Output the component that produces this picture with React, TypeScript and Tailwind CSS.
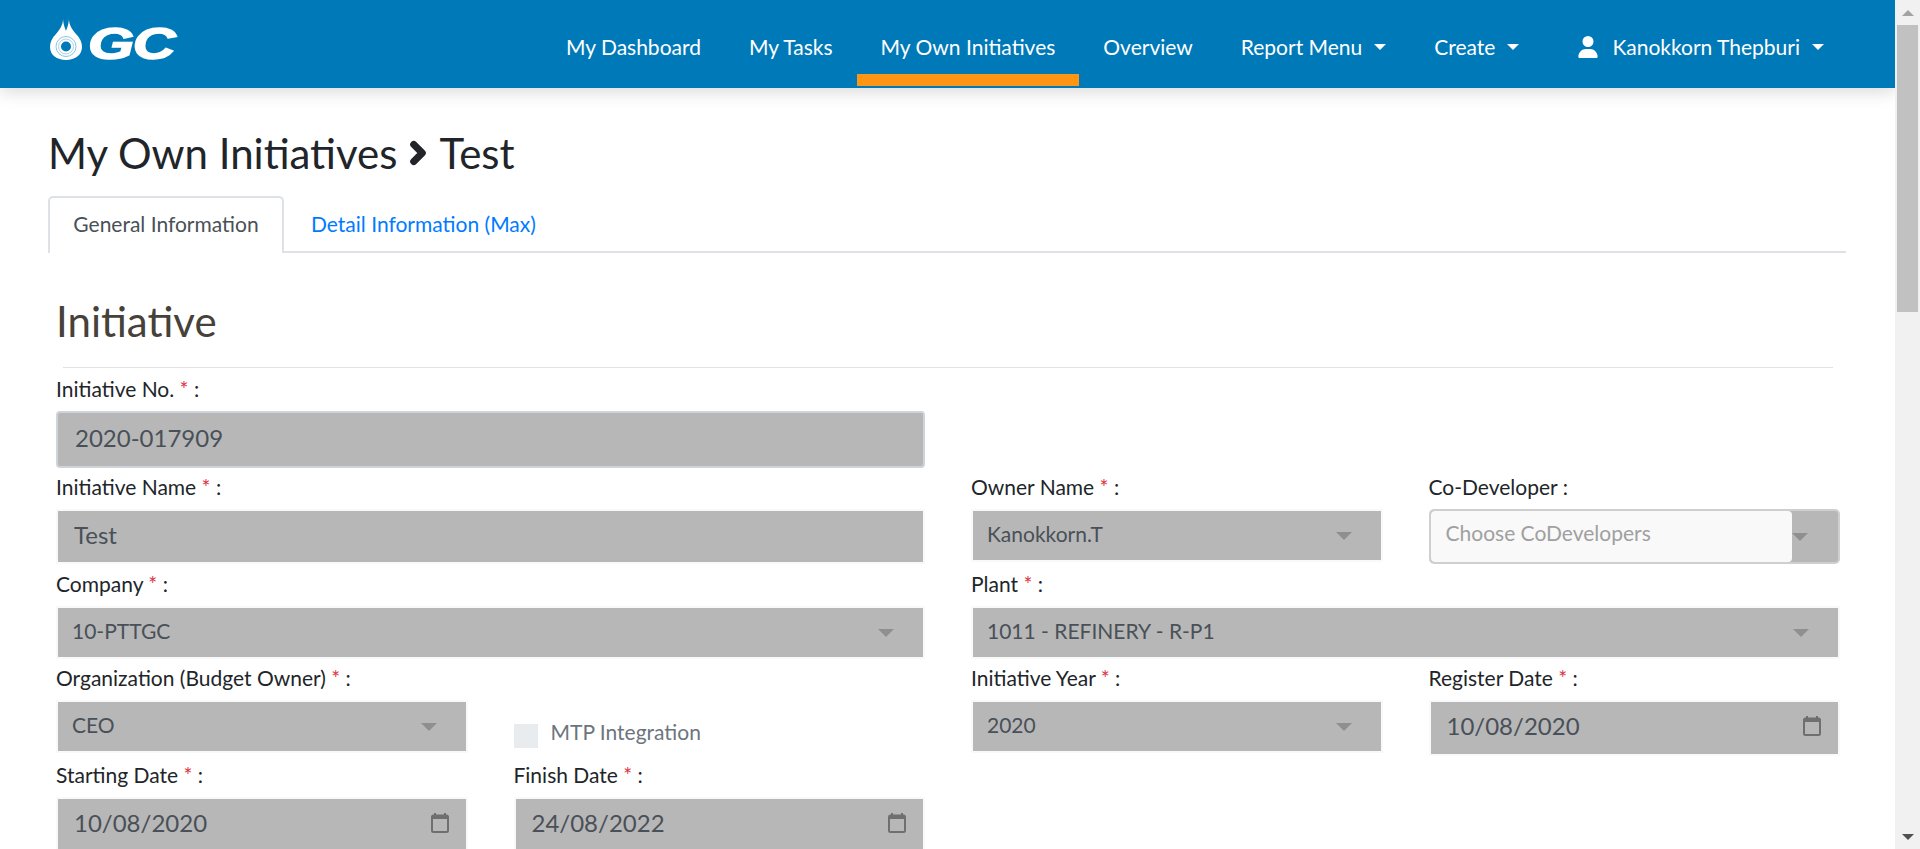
import React from "react";
import { ChevronRight } from "lucide-react";

const inputBase = "bg-[#b7b7b7] text-[#495057] flex items-center justify-between";

function Label({ text, required = true }: { text: string; required?: boolean }) {
  return (
    <label className="block h-[24px] leading-[22px] text-[21px] text-[#212529] mb-[9px]">
      {text}
      {required && <span className="text-[#dc3545]"> *</span>} :
    </label>
  );
}

function Caret() {
  return (
    <svg width="16" height="8" viewBox="0 0 16 8" className="shrink-0">
      <path d="M0 0h16L8 8z" fill="#8f8f8f" />
    </svg>
  );
}

function SelectBox({ value }: { value: string }) {
  return (
    <div className={`${inputBase} h-[53px] border-2 border-[#f9f9f9] pl-[14px] pr-[29px] text-[21px] text-[#444]`}>
      <span className="mb-[3px]">{value}</span>
      <Caret />
    </div>
  );
}

function DateBox({ value }: { value: string }) {
  return (
    <div className={`${inputBase} h-[56px] border-2 border-[#f9f9f9] pl-[16px] pr-[16px] text-[24px]`}>
      <span className="mb-[4px]">{value}</span>
      <svg width="20" height="22" viewBox="0 0 20 22" fill="none" className="shrink-0 mb-[4px]">
        <path d="M5 1v4M15 1v4" stroke="#6f6f6f" strokeWidth="2" />
        <rect x="2" y="3.500" width="16" height="16.500" rx="1.500" stroke="#6f6f6f" strokeWidth="2" />
        <path d="M2 4h16v3H2z" fill="#6f6f6f" />
      </svg>
    </div>
  );
}

function Nav() {
  const items = ["My Dashboard", "My Tasks", "My Own Initiatives", "Overview"];
  return (
    <header className="h-[88px] bg-[#0079b8] shadow-[0_4px_16px_rgba(0,0,0,0.15)] flex items-start justify-between pl-[50px] pr-[47px] relative z-10 text-white">
      <div className="flex items-center mt-[19px] h-[41px]">
        <svg width="32" height="41" viewBox="0 0 32 41">
          <path
            d="M13 0C13 6 10 10 6 15 2 19 0 23 0 28c0 8 7 13 16 13s16-5 16-13c0-5-2-9-6-13-4-5-7-9-7-15-.5 6-2 9-3 12-1-3-2.500-6-3-12z"
            fill="#fff"
          />
          <circle cx="16" cy="27.500" r="10" fill="none" stroke="#8cc4e0" strokeWidth="1" />
          <circle cx="16" cy="27.500" r="7.500" fill="none" stroke="#a6d2e8" strokeWidth="1" />
          <circle cx="16" cy="27.500" r="5" fill="#0079b8" />
        </svg>
        <span className="ml-[6px] mt-[8px] text-[44px] leading-none font-bold italic tracking-[-1px] scale-x-[1.35] origin-left [-webkit-text-stroke:1.5px_white] font-['Liberation_Sans',sans-serif]">
          GC
        </span>
      </div>
      <nav className="flex items-start text-[21px] h-[88px]">
        {items.map((item) => (
          <a
            key={item}
            className={`h-[86px] px-[24px] pt-[32px] leading-[30px] ${
              item === "My Own Initiatives" ? "border-b-[12px] border-[#ff9514]" : ""
            }`}
          >
            {item}
          </a>
        ))}
        {["Report Menu", "Create"].map((item) => (
          <a key={item} className="flex items-center h-[30px] mt-[32px] px-[24px] gap-[12px]">
            {item}
            <span className="w-0 h-0 border-x-[6px] border-x-transparent border-t-[6px] border-t-white" />
          </a>
        ))}
        <a className="flex items-center h-[30px] mt-[32px] ml-[11px] px-[24px] gap-[12px]">
          <svg width="20" height="22" viewBox="0 0 448 512" fill="#fff" className="mr-[2px]">
            <path d="M224 256a128 128 0 1 0 0-256 128 128 0 1 0 0 256zm-45.700 48C79.800 304 0 383.800 0 482.300 0 498.700 13.300 512 29.700 512h388.600c16.400 0 29.700-13.300 29.700-29.700C448 383.800 368.200 304 269.700 304h-91.400z" />
          </svg>
          Kanokkorn Thepburi
          <span className="w-0 h-0 border-x-[6px] border-x-transparent border-t-[6px] border-t-white" />
        </a>
      </nav>
    </header>
  );
}

function Scrollbar() {
  return (
    <div className="w-[25px] h-full bg-[#f1f1f1] flex flex-col items-center shrink-0">
      <div className="h-[25px] w-full flex items-center justify-center">
        <span className="w-0 h-0 border-x-[6px] border-x-transparent border-b-[6px] border-b-[#a3a3a3]" />
      </div>
      <div className="w-[21px] h-[287px] bg-[#c1c1c1]" />
      <div className="flex-1" />
      <div className="h-[25px] w-full flex items-center justify-center">
        <span className="w-0 h-0 border-x-[6px] border-x-transparent border-t-[6px] border-t-[#505050]" />
      </div>
    </div>
  );
}

export default function App() {
  return (
    <div className="h-[849px] w-full flex overflow-hidden bg-white font-['Lato',sans-serif]">
      <div className="flex-1 min-w-0 h-full overflow-hidden">
        <Nav />
        <main className="pl-[48px] pr-[49px]">
          <h1 className="mt-[41px] h-[48px] leading-[48px] text-[42px] text-[#212529] flex items-center">
            My Own Initiatives
            <ChevronRight size={34} strokeWidth={5} className="mx-[4px]" />
            Test
          </h1>
          <div className="mt-[19px] h-[57px] flex border-b-2 border-[#dee2e6] text-[21px]">
            <div className="h-[57px] w-[236px] bg-white border-2 border-b-0 border-[#dee2e6] rounded-t-[5px] flex items-center justify-center text-[#495057] pb-[3px]">
              General Information
            </div>
            <div className="h-[55px] px-[27px] flex items-center text-[#007bff]">
              Detail Information (Max)
            </div>
          </div>
          <div className="pl-[8px] pr-[6px]">
            <h2 className="mt-[44px] h-[48px] leading-[48px] text-[42px] text-[#464139]">Initiative</h2>
            <hr className="mt-[22px] ml-[7px] mr-[7px] border-[#e3e3e3]" />
            <div className="mt-[10px] grid grid-cols-2 gap-x-[46px]">
              <div>
                <Label text="Initiative No." />
                <div className="h-[57px] bg-[#b7b7b7] border-2 border-[#ced4da] rounded-[4px] pl-[17px] pb-[3px] flex items-center text-[24px] text-[#495057]">
                  2020-017909
                </div>
              </div>
              <div />
            </div>
            <div className="mt-[8px] grid grid-cols-2 gap-x-[46px]">
              <div>
                <Label text="Initiative Name" />
                <div className={`${inputBase} h-[55px] border-2 border-[#f9f9f9] pl-[16px] pb-[4px] text-[24px]`}>Test</div>
              </div>
              <div className="grid grid-cols-2 gap-x-[46px]">
                <div>
                  <Label text="Owner Name" />
                  <SelectBox value="Kanokkorn.T" />
                </div>
                <div>
                  <Label text="Co-Developer" required={false} />
                  <div className="h-[55px] bg-[#b7b7b7] border-2 border-[#cfcfcf] rounded-[5px] flex items-center pr-[30px] justify-between">
                    <div className="h-[51px] w-[366px] bg-[#f9f9f9] rounded-[4px] pl-[15px] pb-[7px] flex items-center text-[21px] text-[#a0a0a0]">
                      Choose CoDevelopers
                    </div>
                    <Caret />
                  </div>
                </div>
              </div>
            </div>
            <div className="mt-[9px] grid grid-cols-2 gap-x-[46px]">
              <div>
                <Label text="Company" />
                <SelectBox value="10-PTTGC" />
              </div>
              <div>
                <Label text="Plant" />
                <SelectBox value="1011 - REFINERY - R-P1" />
              </div>
            </div>
            <div className="mt-[8px] grid grid-cols-2 gap-x-[46px]">
              <div className="grid grid-cols-2 gap-x-[46px]">
                <div>
                  <Label text="Organization (Budget Owner)" />
                  <SelectBox value="CEO" />
                </div>
                <div className="flex items-center gap-[13px] pt-[48px]">
                  <span className="w-[24px] h-[24px] bg-[#e9ecef]" />
                  <span className="text-[21px] text-[#6c757d] mb-[8px]">MTP Integration</span>
                </div>
              </div>
              <div className="grid grid-cols-2 gap-x-[46px]">
                <div>
                  <Label text="Initiative Year" />
                  <SelectBox value="2020" />
                </div>
                <div>
                  <Label text="Register Date" />
                  <DateBox value="10/08/2020" />
                </div>
              </div>
            </div>
            <div className="mt-[8px] grid grid-cols-2 gap-x-[46px]">
              <div className="grid grid-cols-2 gap-x-[46px]">
                <div>
                  <Label text="Starting Date" />
                  <DateBox value="10/08/2020" />
                </div>
                <div>
                  <Label text="Finish Date" />
                  <DateBox value="24/08/2022" />
                </div>
              </div>
              <div />
            </div>
          </div>
        </main>
      </div>
      <Scrollbar />
    </div>
  );
}
